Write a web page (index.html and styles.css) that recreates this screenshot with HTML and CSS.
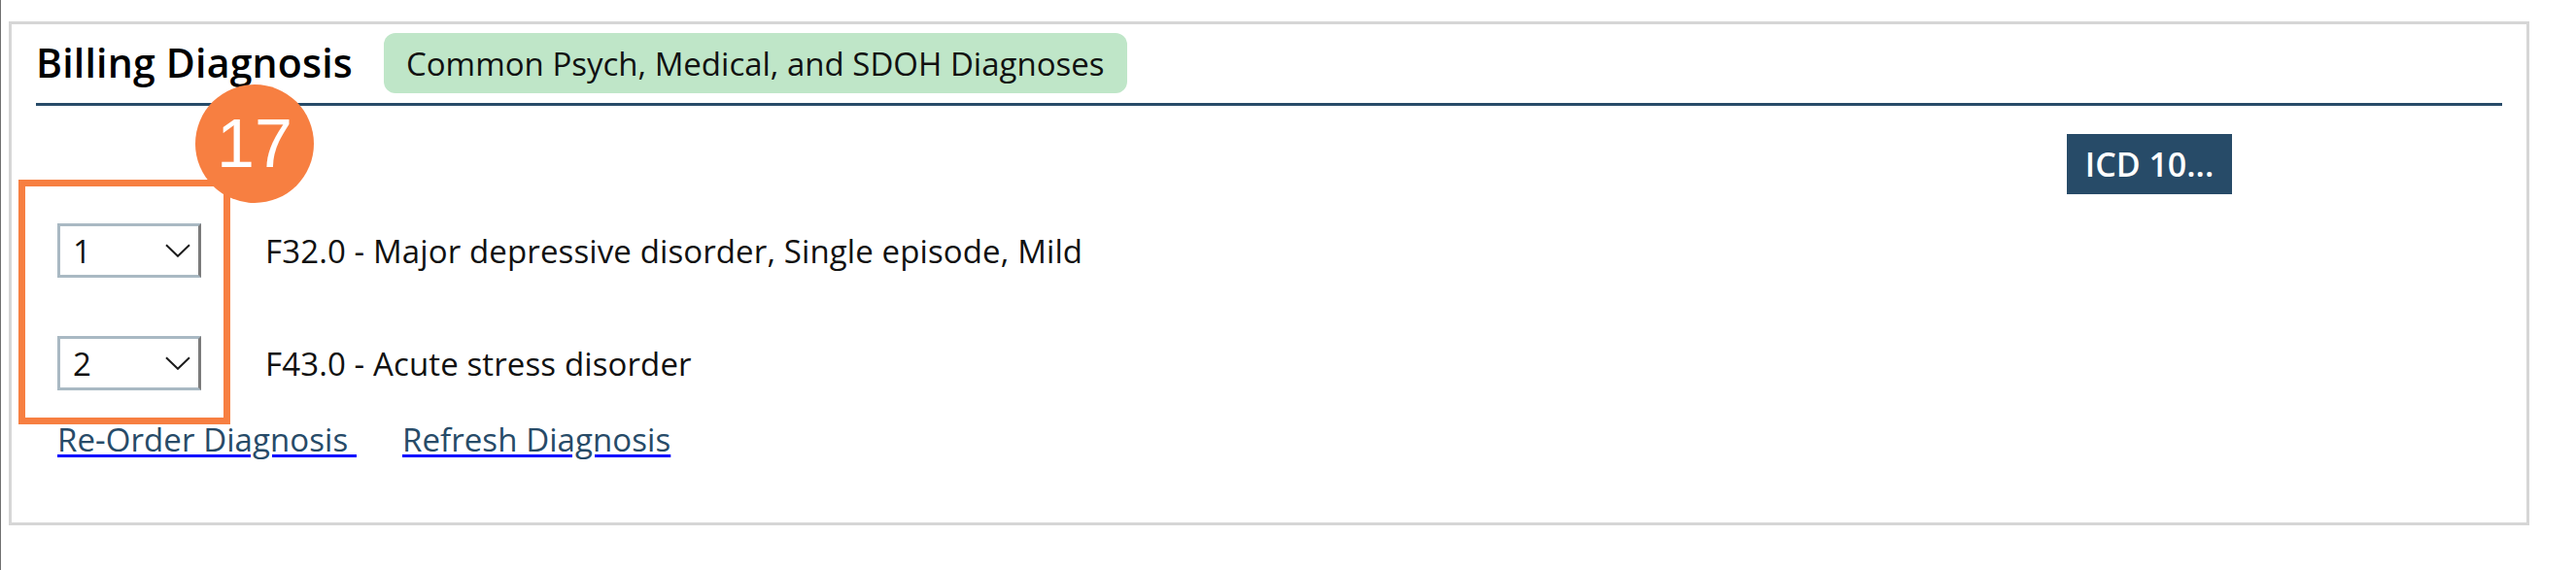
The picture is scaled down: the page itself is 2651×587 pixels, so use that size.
FILE: index.html
```html
<!DOCTYPE html>
<html lang="en">
<head>
<meta charset="utf-8">
<title>Billing Diagnosis</title>
<link rel="stylesheet" href="styles.css">
</head>
<body>
<div class="page">
  <section class="panel">
    <header class="panel-head">
      <h2 class="title">Billing Diagnosis</h2>
      <span class="tag">Common Psych, Medical, and SDOH Diagnoses</span>
    </header>
    <div class="panel-body">
      <div class="diag-list">
        <div class="diag-rows">
          <div class="diag-row">
            <div class="order-select" role="combobox" aria-label="Order">
              <span class="order-value">1</span>
              <svg class="chevron" width="26" height="14" viewBox="0 0 26 14" aria-hidden="true"><path d="M1 1.2 L13 12.8 L25 1.2" fill="none" stroke="#1c1c1c" stroke-width="2"/></svg>
            </div>
            <span class="diag-text">F32.0 - Major depressive disorder, Single episode, Mild</span>
          </div>
          <div class="diag-row">
            <div class="order-select" role="combobox" aria-label="Order">
              <span class="order-value">2</span>
              <svg class="chevron" width="26" height="14" viewBox="0 0 26 14" aria-hidden="true"><path d="M1 1.2 L13 12.8 L25 1.2" fill="none" stroke="#1c1c1c" stroke-width="2"/></svg>
            </div>
            <span class="diag-text">F43.0 - Acute stress disorder</span>
          </div>
        </div>
        <div class="diag-links">
          <a href="#" class="diag-link">Re-Order Diagnosis&nbsp;</a>
          <a href="#" class="diag-link">Refresh Diagnosis</a>
        </div>
      </div>
      <button class="icd-btn" type="button">ICD 10...</button>
    </div>
    <div class="callout-box" aria-hidden="true"></div>
    <div class="callout-num">17</div>
  </section>
</div>
</body>
</html>
```
FILE: styles.css
```css
html, body {
  margin: 0;
  padding: 0;
  background: #ffffff;
}

body {
  font-family: "Open Sans", "Noto Sans", sans-serif;
  color: #111111;
}

.page {
  box-sizing: border-box;
  min-height: 100vh;
  border-left: 1px solid #707070;
  padding-top: 22px;
}

.panel {
  position: relative;
  box-sizing: border-box;
  height: 519px;
  margin: 0 48px 0 8px;
  border: 3px solid #d6d6d6;
  background: #ffffff;
}

.panel-head {
  display: flex;
  align-items: center;
  gap: 32px;
  margin: 0 25px;
  padding: 9px 0 10px;
  border-bottom: 3px solid #274b68;
}

.title {
  margin: 0;
  font-size: 41px;
  line-height: 1;
  font-weight: 600;
  color: #000000;
  letter-spacing: 0.2px;
  position: relative;
  top: -1px;
}

.tag {
  display: flex;
  align-items: center;
  box-sizing: border-box;
  height: 62px;
  padding: 0 23px;
  border-radius: 12px;
  background: #bfe6c8;
  font-size: 33px;
  line-height: 1;
  color: #111111;
}

.panel-body {
  display: flex;
  align-items: flex-start;
  padding: 0 303px 0 47px;
}

.diag-list {
  flex: 1;
  margin-top: 121px;
}

.diag-rows {
  display: flex;
  flex-direction: column;
  gap: 60px;
}

.diag-row {
  display: flex;
  align-items: center;
  gap: 66px;
}

.order-select {
  display: flex;
  align-items: center;
  justify-content: space-between;
  box-sizing: border-box;
  width: 148px;
  height: 56px;
  padding: 0 8px 0 13px;
  border: 3px solid #a9b9c3;
  border-right-color: #7b7b7b;
  background: #ffffff;
}

.order-value {
  font-size: 33px;
  line-height: 1;
  color: #111111;
}

.chevron {
  display: block;
}

.diag-text {
  font-size: 33px;
  line-height: 1;
  color: #111111;
  letter-spacing: 0.12px;
}

.diag-links {
  display: flex;
  gap: 47px;
  margin-top: 34px;
}

.diag-link {
  font-size: 33px;
  line-height: 1;
  color: #274b68;
  letter-spacing: 0.08px;
  text-decoration: underline;
  text-decoration-color: #0000ff;
  text-decoration-thickness: 2.5px;
  text-underline-offset: 3px;
}

.icd-btn {
  box-sizing: border-box;
  width: 170px;
  height: 62px;
  margin-top: 29px;
  padding: 0;
  border: none;
  border-radius: 0;
  background: #274b68;
  color: #ffffff;
  font-family: "Open Sans", "Noto Sans", sans-serif;
  font-size: 34px;
  font-weight: 600;
  line-height: 1;
  text-align: center;
}

.callout-box {
  position: absolute;
  left: 7px;
  top: 160px;
  box-sizing: border-box;
  width: 218px;
  height: 252px;
  border: 7px solid #f77f41;
}

.callout-num {
  position: absolute;
  left: 189px;
  top: 62px;
  width: 122px;
  height: 122px;
  border-radius: 50%;
  background: #f77f41;
  color: #ffffff;
  font-family: "Liberation Sans", Arial, sans-serif;
  font-size: 70px;
  line-height: 122px;
  text-align: center;
}
```
